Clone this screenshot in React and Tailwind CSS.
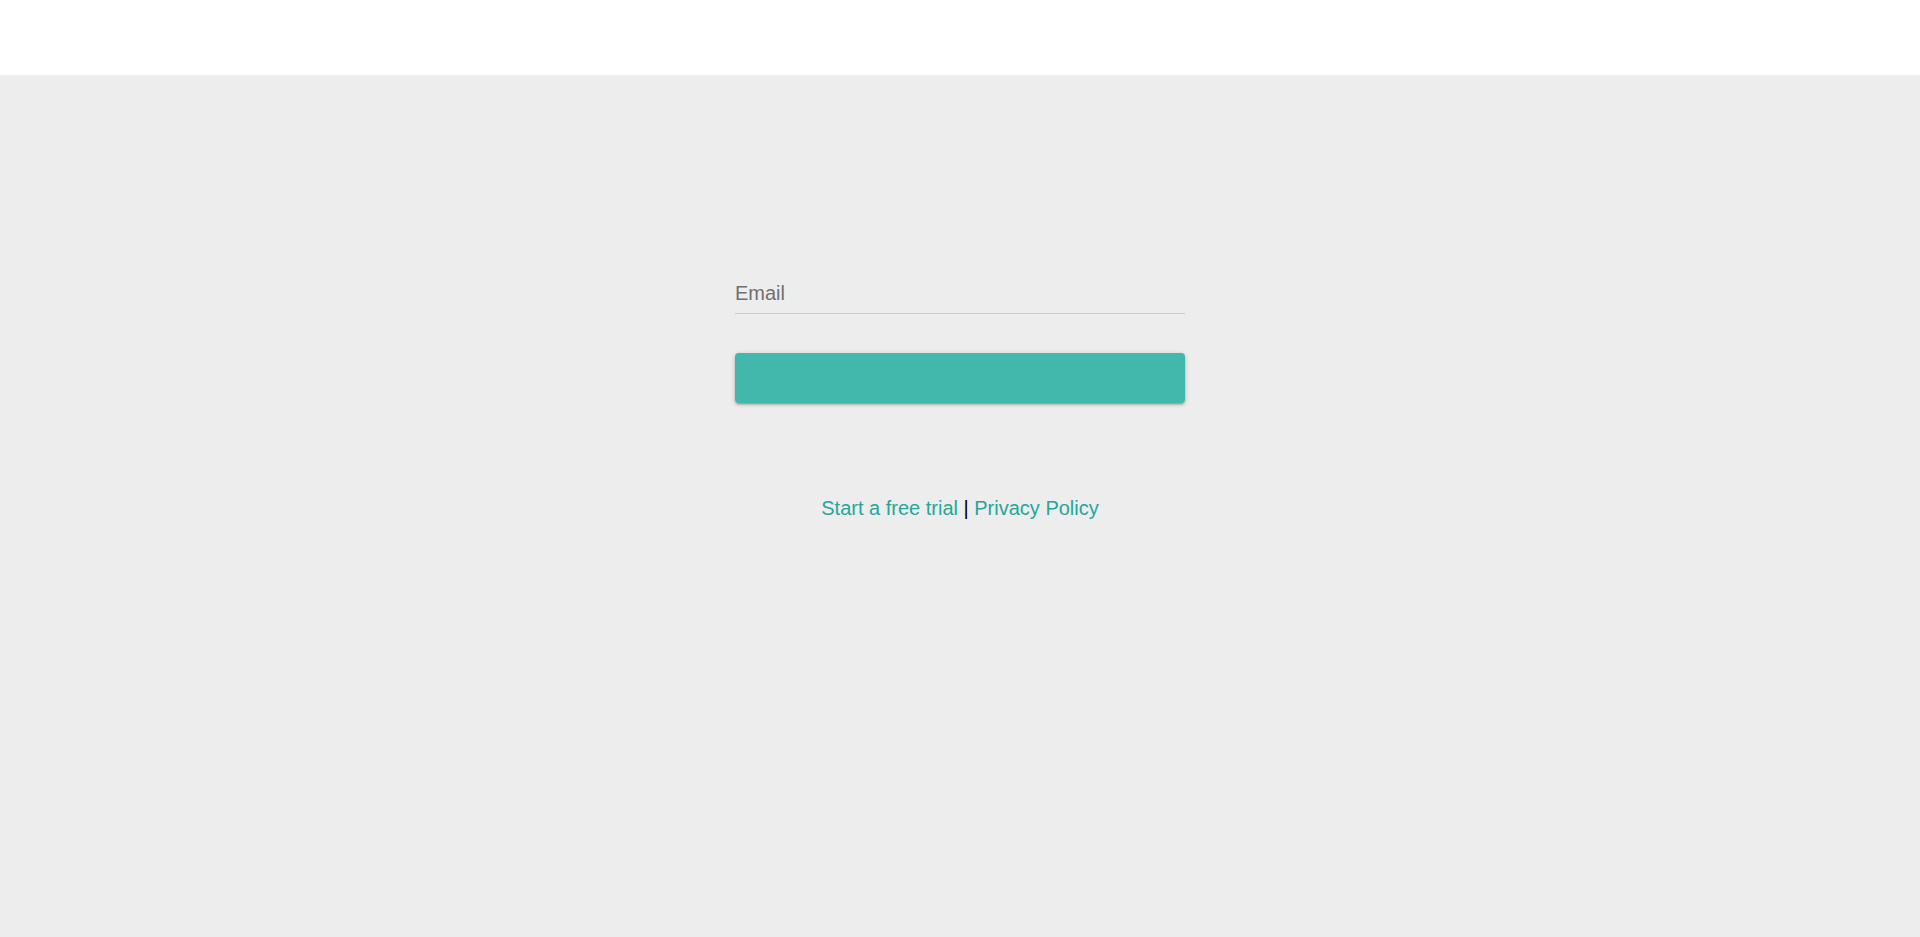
import React from "react";

export default function App() {
  return (
    <div className="w-full h-[937px] flex flex-col bg-white" style={{ fontFamily: '"Liberation Sans", Arial, sans-serif' }}>
      <header className="h-[75px] bg-white shrink-0" />
      <main className="flex-1 bg-[#ededed] flex flex-col items-center pt-[198px]">
        <div className="w-[450px]">
          <input
            type="email"
            placeholder="Email"
            className="w-full h-[41px] bg-transparent border-0 border-b border-[#cccccc] outline-none text-[20px] text-[#333] placeholder:text-[#707070] p-0"
            style={{ fontFamily: '"Liberation Sans", Arial, sans-serif' }}
          />
          <button
            type="button"
            className="mt-[39px] w-full h-[50px] rounded-[4px] bg-[#42b8ac] shadow-[0_2px_2px_0_rgba(0,0,0,0.14),0_3px_1px_-2px_rgba(0,0,0,0.12),0_1px_5px_0_rgba(0,0,0,0.2)]"
          />
        </div>
        <div className="mt-[83px] text-[20px] leading-[30px] text-black">
          <a href="#" className="text-[#26a69a]">Start a free trial</a>
          {" | "}
          <a href="#" className="text-[#26a69a]">Privacy Policy</a>
        </div>
      </main>
    </div>
  );
}
